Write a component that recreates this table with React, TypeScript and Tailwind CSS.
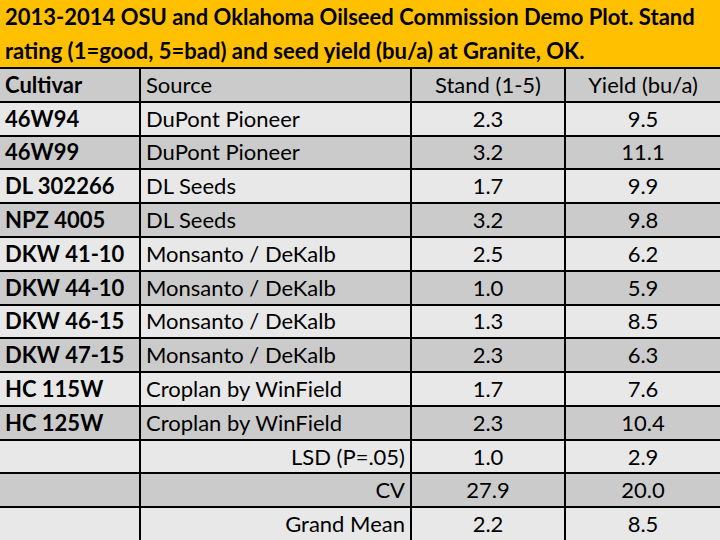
import React from 'react';

type Row = {
  cultivar: string;
  source: string;
  stand: string;
  yieldVal: string;
  stat?: boolean;
};

const rows: Row[] = [
  { cultivar: '46W94', source: 'DuPont Pioneer', stand: '2.3', yieldVal: '9.5' },
  { cultivar: '46W99', source: 'DuPont Pioneer', stand: '3.2', yieldVal: '11.1' },
  { cultivar: 'DL 302266', source: 'DL Seeds', stand: '1.7', yieldVal: '9.9' },
  { cultivar: 'NPZ 4005', source: 'DL Seeds', stand: '3.2', yieldVal: '9.8' },
  { cultivar: 'DKW 41-10', source: 'Monsanto / DeKalb', stand: '2.5', yieldVal: '6.2' },
  { cultivar: 'DKW 44-10', source: 'Monsanto / DeKalb', stand: '1.0', yieldVal: '5.9' },
  { cultivar: 'DKW 46-15', source: 'Monsanto / DeKalb', stand: '1.3', yieldVal: '8.5' },
  { cultivar: 'DKW 47-15', source: 'Monsanto / DeKalb', stand: '2.3', yieldVal: '6.3' },
  { cultivar: 'HC 115W', source: 'Croplan by WinField', stand: '1.7', yieldVal: '7.6' },
  { cultivar: 'HC 125W', source: 'Croplan by WinField', stand: '2.3', yieldVal: '10.4' },
  { cultivar: '', source: 'LSD (P=.05)', stand: '1.0', yieldVal: '2.9', stat: true },
  { cultivar: '', source: 'CV', stand: '27.9', yieldVal: '20.0', stat: true },
  { cultivar: '', source: 'Grand Mean', stand: '2.2', yieldVal: '8.5', stat: true },
];

const dark = 'bg-[#cbcbcb]';
const light = 'bg-[#e8e8e8]';

export default function App() {
  return (
    <div
      className="flex h-[540px] w-[720px] flex-col overflow-hidden bg-black text-[22px] leading-none text-black"
      style={{ fontFamily: 'Lato, "Open Sans", sans-serif' }}
    >
      {/* Title band */}
      <div className="flex h-[67px] flex-col justify-center whitespace-nowrap bg-[#ffc000] px-[5px] font-bold leading-[34px]">
        <div>2013-2014 OSU and Oklahoma Oilseed Commission Demo Plot. Stand</div>
        <div>rating (1=good, 5=bad) and seed yield (bu/a) at Granite, OK.</div>
      </div>

      <div className="mt-[2px] grid flex-1 grid-cols-[139px_269px_152px_1fr] grid-rows-[repeat(14,1fr)] gap-[2px] whitespace-nowrap">
        {/* Header row */}
        <div className={`${dark} flex items-center px-[5px] font-bold`}>Cultivar</div>
        <div className={`${dark} flex items-center px-[5px]`}>Source</div>
        <div className={`${dark} flex items-center justify-center`}>Stand (1-5)</div>
        <div className={`${dark} flex items-center justify-center`}>Yield (bu/a)</div>

        {rows.map((r, i) => {
          const bg = i % 2 === 0 ? light : dark;
          return (
            <React.Fragment key={i}>
              <div className={`${bg} flex items-center px-[5px] font-bold`}>{r.cultivar}</div>
              <div
                className={`${bg} flex items-center px-[5px] ${r.stat ? 'justify-end' : ''}`}
              >
                {r.source}
              </div>
              <div className={`${bg} flex items-center justify-center`}>{r.stand}</div>
              <div className={`${bg} flex items-center justify-center`}>{r.yieldVal}</div>
            </React.Fragment>
          );
        })}
      </div>
    </div>
  );
}
